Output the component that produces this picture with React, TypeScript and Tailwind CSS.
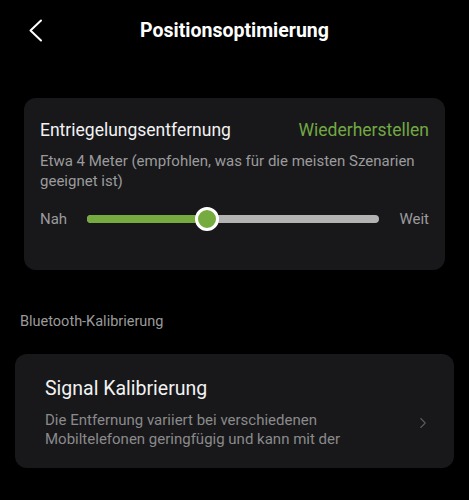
import { ChevronRight } from "lucide-react";

const value = 41;

function Slider() {
  return (
    <div className="relative mx-[20px] h-[24px] flex-1">
      <div className="absolute left-0 right-0 top-[8px] h-[8px] rounded-full bg-[#b3b3b3]" />
      <div
        className="absolute left-0 top-[8px] h-[8px] rounded-full bg-[#76ac3f]"
        style={{ width: `${value}%` }}
      />
      <div
        className="absolute top-0 h-[24px] w-[24px] -translate-x-1/2 rounded-full border-[3px] border-white bg-[#76ac3f]"
        style={{ left: `${value}%` }}
      />
    </div>
  );
}

export default function App() {
  return (
    <div className="h-[500px] w-[469px] overflow-hidden bg-black font-['Roboto',sans-serif] text-white">
      <header className="relative flex h-[62px] items-center justify-center">
        <svg
          className="absolute left-[28px] top-[19px]"
          width="16"
          height="23"
          viewBox="0 0 16 23"
          fill="none"
          stroke="white"
          strokeWidth="2"
          strokeLinecap="round"
          strokeLinejoin="round"
        >
          <path d="M13 1.5 L2.5 11.5 L13 21.5" />
        </svg>
        <h1 className="text-[19.5px] font-bold">Positionsoptimierung</h1>
      </header>

      <section className="mx-[24px] mt-[36px] h-[172px] rounded-[12px] bg-[#18181b] px-[16px] pt-[21px]">
        <div className="flex items-center justify-between leading-[22px]">
          <span className="text-[17.5px] text-[#f2f2f2]">Entriegelungsentfernung</span>
          <span className="text-[17.5px] text-[#72a843]">Wiederherstellen</span>
        </div>
        <p className="mt-[10px] text-[15px] leading-[20px] text-[#9b9b9b]">
          Etwa 4 Meter (empfohlen, was für die meisten Szenarien geeignet ist)
        </p>
        <div className="mt-[16px] flex items-center text-[15px] text-[#9b9b9b]">
          <span>Nah</span>
          <Slider />
          <span>Weit</span>
        </div>
      </section>

      <div className="mt-[42px] px-[20px] text-[14.5px] leading-[20px] text-[#9b9b9b]">
        Bluetooth-Kalibrierung
      </div>

      <section className="mx-[15px] mt-[22px] flex h-[114px] items-center rounded-[12px] bg-[#18181b] pl-[30px] pr-[22px]">
        <div className="flex-1 pt-[4px]">
          <div className="text-[19.5px] leading-[24px] text-[#f2f2f2]">Signal Kalibrierung</div>
          <p className="mt-[10px] text-[15px] leading-[19px] text-[#8a8a8a]">
            Die Entfernung variiert bei verschiedenen
            <br />
            Mobiltelefonen geringfügig und kann mit der
          </p>
        </div>
        <ChevronRight className="mt-[24px] text-[#5a5a5a]" size={18} strokeWidth={1.5} />
      </section>
    </div>
  );
}
